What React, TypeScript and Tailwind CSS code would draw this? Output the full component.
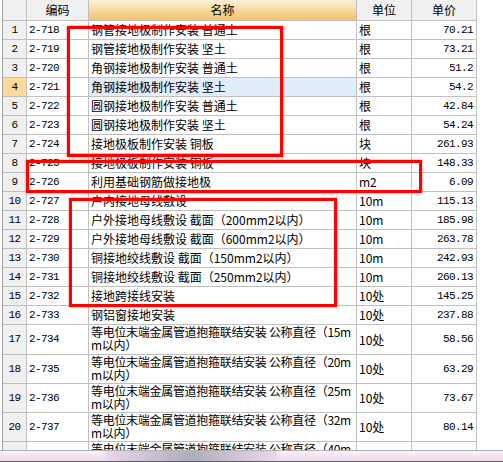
import * as React from "react";

type Row = {
  no: string;
  code: string;
  name: string[];
  unit: string;
  price: string;
  tall?: boolean;
  active?: boolean;
};

const cjk = "font-['Noto_Sans_CJK_SC','Noto_Sans',sans-serif]";
const mono = "font-['Liberation_Mono',monospace] text-[11px] tracking-[-0.6px]";

const long = "等电位末端金属管道抱箍联结安装 公称直径（";

const rows: Row[] = [
  { no: "1", code: "2-718", name: ["钢管接地极制作安装 普通土"], unit: "根", price: "70.21" },
  { no: "2", code: "2-719", name: ["钢管接地极制作安装 坚土"], unit: "根", price: "73.21" },
  { no: "3", code: "2-720", name: ["角钢接地极制作安装 普通土"], unit: "根", price: "51.2" },
  { no: "4", code: "2-721", name: ["角钢接地极制作安装 坚土"], unit: "根", price: "54.2", active: true },
  { no: "5", code: "2-722", name: ["圆钢接地极制作安装 普通土"], unit: "根", price: "42.84" },
  { no: "6", code: "2-723", name: ["圆钢接地极制作安装 坚土"], unit: "根", price: "54.24" },
  { no: "7", code: "2-724", name: ["接地极板制作安装 铜板"], unit: "块", price: "261.93" },
  { no: "8", code: "2-725", name: ["接地极板制作安装 铜板"], unit: "块", price: "148.33" },
  { no: "9", code: "2-726", name: ["利用基础钢筋做接地极"], unit: "m2", price: "6.09" },
  { no: "10", code: "2-727", name: ["户内接地母线敷设"], unit: "10m", price: "115.13" },
  { no: "11", code: "2-728", name: ["户外接地母线敷设 截面（200mm2以内）"], unit: "10m", price: "185.98" },
  { no: "12", code: "2-729", name: ["户外接地母线敷设 截面（600mm2以内）"], unit: "10m", price: "263.78" },
  { no: "13", code: "2-730", name: ["铜接地绞线敷设 截面（150mm2以内）"], unit: "10m", price: "242.93" },
  { no: "14", code: "2-731", name: ["铜接地绞线敷设 截面（250mm2以内）"], unit: "10m", price: "260.13" },
  { no: "15", code: "2-732", name: ["接地跨接线安装"], unit: "10处", price: "145.25" },
  { no: "16", code: "2-733", name: ["钢铝窗接地安装"], unit: "10处", price: "237.88" },
  { no: "17", code: "2-734", name: [long + "15m", "m以内）"], unit: "10处", price: "58.56", tall: true },
  { no: "18", code: "2-735", name: [long + "20m", "m以内）"], unit: "10处", price: "63.29", tall: true },
  { no: "19", code: "2-736", name: [long + "25m", "m以内）"], unit: "10处", price: "73.67", tall: true },
  { no: "20", code: "2-737", name: [long + "32m", "m以内）"], unit: "10处", price: "80.14", tall: true },
  { no: "", code: "", name: [long + "40m", "m以内）"], unit: "10处", price: "", tall: true },
];

const cell = "flex h-full shrink-0 overflow-hidden whitespace-nowrap border-r border-[#c0c0c0]";

function GridRow({ row, first }: { row: Row; first: boolean }) {
  const h = row.tall ? (first ? "h-[30px]" : "h-[29px]") : "h-[19px]";
  return (
    <div className={`flex ${h} border-b border-[#c0c0c0] text-black`}>
      <div
        className={`${cell} w-[24px] items-center justify-center ${mono} ${
          row.active ? "bg-[#fcdc98]" : "bg-[#f0f0f0]"
        }`}
      >
        {row.no}
      </div>
      <div className={`${cell} w-[62px] items-center pl-[2px] ${mono}`}>{row.code}</div>
      <div
        className={`${cell} w-[268px] pl-[2px] ${cjk} text-[12px] ${
          row.tall
            ? "flex-col items-start justify-start leading-[13px] tracking-[-0.3px]"
            : "items-center"
        } ${row.active ? "bg-[#e1edfb]" : ""}`}
      >
        {row.name.map((line, i) => (
          <span key={i}>{line}</span>
        ))}
      </div>
      <div className={`${cell} w-[55px] items-center pl-[2px] ${cjk} text-[12px]`}>{row.unit}</div>
      <div className={`${cell} w-[65px] items-center justify-end pr-[3px] ${mono}`}>{row.price}</div>
    </div>
  );
}

export default function App() {
  return (
    <div className="relative h-[462px] w-[503px] overflow-hidden bg-white">
      <div className="flex h-[450px] flex-col overflow-hidden">
        <div className="ml-[2px] flex w-[475px] flex-col border-l border-[#a0a0a0]">
          <div className={`flex h-[21px] border-b border-[#c0c0c0] ${cjk} text-[12px] text-black`}>
            <div className={`${cell} w-[24px] bg-[#f0f0f0]`} />
            <div className={`${cell} w-[62px] items-center justify-center bg-[#f0f0f0]`}>编码</div>
            <div
              className={`${cell} w-[268px] items-center justify-center bg-gradient-to-b from-[#fdf1d8] to-[#f2c266]`}
            >
              名称
            </div>
            <div className={`${cell} w-[55px] items-center justify-center bg-[#f0f0f0]`}>单位</div>
            <div className={`${cell} w-[65px] items-center justify-center bg-[#f0f0f0]`}>单价</div>
          </div>
          {rows.map((r, i) => (
            <GridRow key={i} row={r} first={r.no === "17"} />
          ))}
        </div>
      </div>

      {/* horizontal scrollbar */}
      <div className="flex h-[12px] border-t border-b border-t-[#b0b0b0] border-b-[#606060] bg-gradient-to-b from-[#f9f1f9] to-[#ead8ea]">
        <div className="w-[105px]" />
        <div className="w-[172px] bg-gradient-to-r from-[#ead8ea] via-[#aeaebc] to-[#ead8ea]" />
      </div>

      {/* red annotation boxes */}
      <div className="absolute left-[67px] top-[26px] h-[131px] w-[216px] border-[3px] border-[#ff0000] shadow-[0_0_2px_rgba(255,0,0,0.6)]" />
      <div className="absolute left-[26px] top-[160px] h-[33px] w-[396px] border-[3px] border-[#ff0000] shadow-[0_0_2px_rgba(255,0,0,0.6)]" />
      <div className="absolute left-[69px] top-[198px] h-[109px] w-[268px] border-[3px] border-[#ff0000] shadow-[0_0_2px_rgba(255,0,0,0.6)]" />
    </div>
  );
}
